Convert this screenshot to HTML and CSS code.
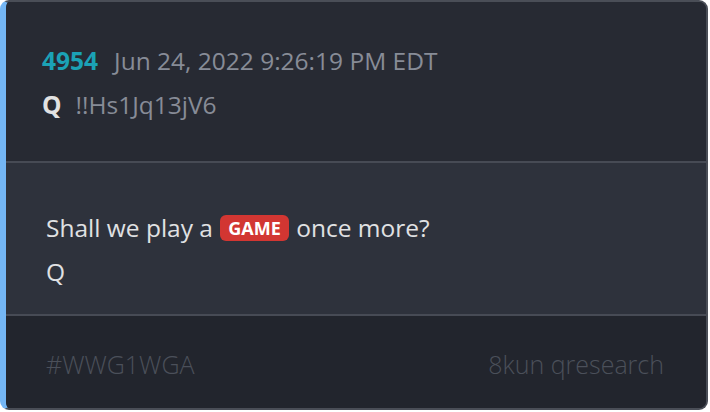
FILE: index.html
```html
<!DOCTYPE html>
<html>
<head>
<meta charset="utf-8">
<link rel="stylesheet" href="styles.css">
</head>
<body>
<div class="card">
  <div class="head">
    <div class="line"><span class="num">4954</span><span class="date">Jun 24, 2022 9:26:19 PM EDT</span></div>
    <div class="line"><span class="author">Q</span><span class="trip">!!Hs1Jq13jV6</span></div>
  </div>
  <div class="body">
    <div class="line">Shall we play a <span class="badge">GAME</span> once more?</div>
    <div class="line">Q</div>
  </div>
  <div class="foot">
    <span>#WWG1WGA</span>
    <span>8kun qresearch</span>
  </div>
</div>
</body>
</html>
```
FILE: styles.css
```css
html, body {
  margin: 0;
  padding: 0;
  background: #ffffff;
}
body {
  width: 710px;
  height: 412px;
  font-family: "Open Sans", "Liberation Sans", sans-serif;
}
.card {
  box-sizing: border-box;
  width: 708px;
  height: 410px;
  border: 2px solid #4a4e57;
  border-left: 6px solid #74b6f4;
  border-radius: 9px;
  overflow: hidden;
  display: flex;
  flex-direction: column;
  background: #272a33;
}
.line {
  height: 44px;
  line-height: 44px;
  font-size: 24.5px;
  white-space: nowrap;
}
.head {
  height: 161px;
  box-sizing: border-box;
  padding: 37px 0 0 36px;
  background: #272a33;
  border-bottom: 2px solid #474b55;
}
.num {
  color: #1ba2b6;
  font-weight: 700;
  margin-right: 16px;
}
.date, .trip {
  color: #878c97;
}
.author {
  color: #e2e2e2;
  font-weight: 700;
  margin-right: 14px;
}
.body {
  height: 153px;
  box-sizing: border-box;
  padding: 43px 0 0 40px;
  background: #2e323c;
  border-bottom: 2px solid #474b55;
  color: #e0e1e3;
}
.badge {
  display: inline-block;
  background: #d23632;
  color: #ffffff;
  font-weight: 700;
  font-size: 18px;
  line-height: 26px;
  padding: 0 8px;
  border-radius: 6px;
  vertical-align: 2px;
  margin: 0 1px;
}
.foot {
  flex: 1;
  background: #22252d;
  display: flex;
  justify-content: space-between;
  align-items: center;
  padding: 4px 42px 0 40px;
  font-size: 25px;
  font-weight: 300;
  color: #4b505a;
}
```
